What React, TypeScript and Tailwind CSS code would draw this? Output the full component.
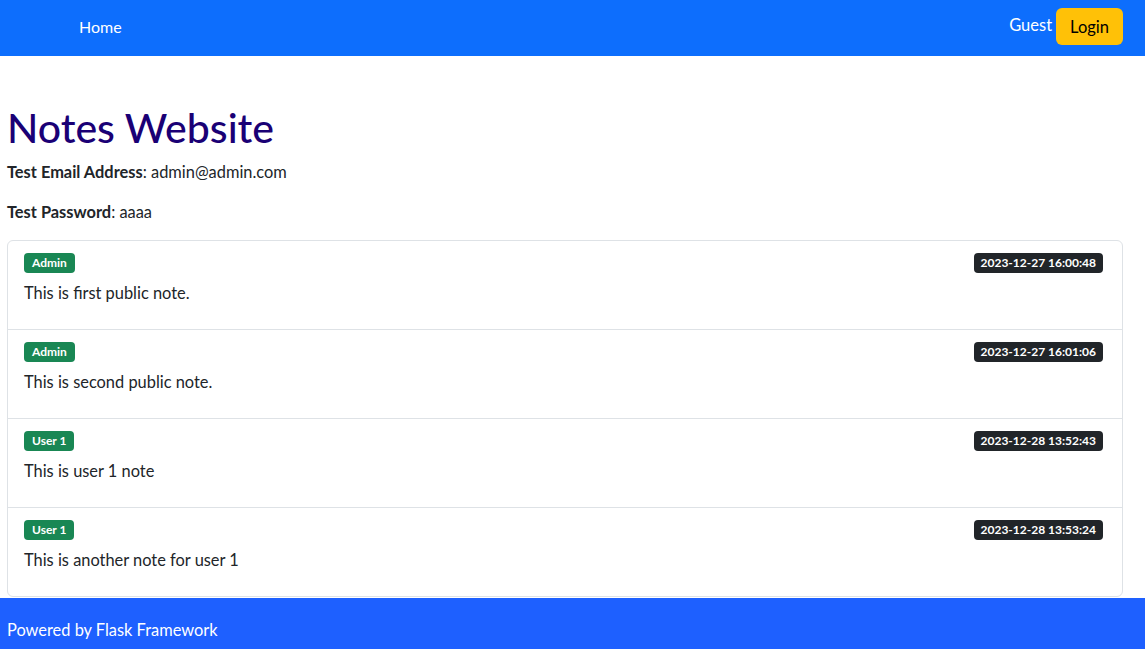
const notes = [
  { user: "Admin", date: "2023-12-27 16:00:48", text: "This is first public note." },
  { user: "Admin", date: "2023-12-27 16:01:06", text: "This is second public note." },
  { user: "User 1", date: "2023-12-28 13:52:43", text: "This is user 1 note" },
  { user: "User 1", date: "2023-12-28 13:53:24", text: "This is another note for user 1" },
]

function NavBar() {
  return (
    <nav className="h-14 bg-[#0d6efd] flex items-center justify-between pl-[79px] pr-[22px]">
      <a className="text-white text-base mt-[-2px]">Home</a>
      <div className="flex items-center mt-[-3px]">
        <span className="text-white text-[16.5px] mr-[4px] -mt-[3px]">Guest</span>
        <button className="bg-[#ffc107] text-[#000] text-[16.5px] h-[37px] px-[14px] rounded-[6px]">
          Login
        </button>
      </div>
    </nav>
  )
}

function NoteItem({ user, date, text, first }: { user: string; date: string; text: string; first: boolean }) {
  return (
    <li className={`pl-4 pr-[19px] pt-3 pb-6 ${first ? "" : "border-t border-[#dee2e6]"}`}>
      <div className="flex items-center justify-between h-5">
        <span className="bg-[#198754] text-white text-[12px] font-bold leading-none px-[8px] py-[4px] rounded-[4px]">
          {user}
        </span>
        <span className="bg-[#212529] text-white text-[12px] font-bold leading-none px-[7px] py-[4px] rounded-[4px]">
          {date}
        </span>
      </div>
      <p className="mt-2 leading-6 text-[#212529] text-[16.4px]">{text}</p>
    </li>
  )
}

export default function App() {
  return (
    <div className="min-h-screen bg-white text-[#212529] text-base leading-6 font-['Lato','Noto_Sans',sans-serif]">
      <NavBar />
      <main className="pl-[7px] pr-[22px] pt-[48px] pb-[1px]">
        <h1 className="text-[41px] font-medium leading-[48px] text-[#1a0075] mb-2">Notes Website</h1>
        <p className="mb-4 text-[16.4px]">
          <strong className="font-bold">Test Email Address</strong>: admin@admin.com
        </p>
        <p className="mb-4 text-[16.4px]">
          <strong className="font-bold">Test Password</strong>: aaaa
        </p>
        <ul className="border border-[#dee2e6] rounded-[6px]">
          {notes.map((n, i) => (
            <NoteItem key={i} {...n} first={i === 0} />
          ))}
        </ul>
      </main>
      <footer className="bg-[#1e60ff] text-white text-[16.4px] py-5 px-[7px]">Powered by Flask Framework</footer>
    </div>
  )
}
